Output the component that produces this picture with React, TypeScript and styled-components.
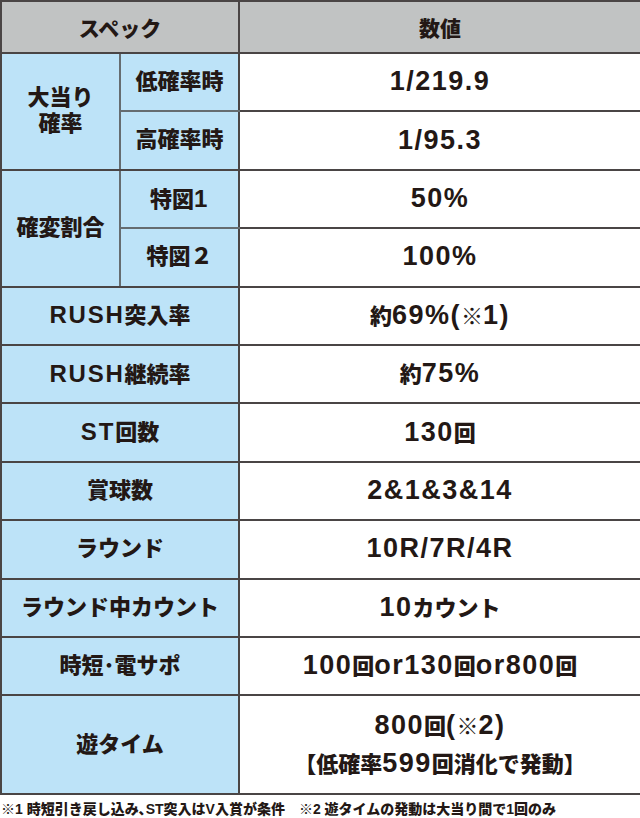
import React from "react";
import styled, { createGlobalStyle } from "styled-components";

const GlobalStyle = createGlobalStyle`
  html, body {
    margin: 0;
    padding: 0;
    background: #ffffff;
  }
  body {
    font-family: "Liberation Sans", "Noto Sans CJK JP", sans-serif;
    color: #231815;
  }
`;

const Sheet = styled.div`
  width: 640px;
`;

const Table = styled.table`
  width: 640px;
  border-collapse: collapse;
  table-layout: fixed;
`;

const Row = styled.tr<{ $h: number }>`
  height: ${(p) => p.$h}px;
`;

const HeadCell = styled.th`
  background: #c1c3c3;
  border: 2px solid #4a4545;
  padding: 0;
  font-size: 21px;
  font-weight: 900;
  text-align: center;
`;

const LabelCell = styled.td<{ $inner?: "left" | "right" }>`
  background: #bde3f8;
  border: 2px solid #4a4545;
  ${(p) => (p.$inner === "left" ? "border-left-color: #656c70;" : "")}
  ${(p) => (p.$inner === "right" ? "border-right-color: #656c70;" : "")}
  padding: 0;
  font-size: 22px;
  font-weight: 900;
  line-height: 1.2;
  text-align: center;
`;

const SubTopLine = styled.tr<{ $h: number }>`
  height: ${(p) => p.$h}px;
  & > td.sub {
    border-bottom-color: #656c70;
  }
`;

const ValueCell = styled.td`
  background: #ffffff;
  border: 2px solid #4a4545;
  padding: 0;
  font-size: 22px;
  font-weight: 900;
  line-height: 36px;
  text-align: center;
`;

// latin runs are set larger and looser than the kana/kanji around them
const Latin = styled.span<{ $size: number; $track: number }>`
  font-size: ${(p) => p.$size}px;
  font-weight: 700;
  letter-spacing: ${(p) => p.$track}px;
`;

const Note = styled.div`
  margin-top: 3px;
  padding-left: 1px;
  font-size: 14px;
  font-weight: 900;
  white-space: nowrap;
`;

function Mixed({ text, size, track }: { text: string; size: number; track: number }) {
  const parts = text.split(/([\x21-\x7e]+)/).filter(Boolean);
  return (
    <>
      {parts.map((p, i) =>
        /^[\x21-\x7e]+$/.test(p) ? (
          <Latin key={i} $size={size} $track={track}>
            {p}
          </Latin>
        ) : (
          <React.Fragment key={i}>{p}</React.Fragment>
        )
      )}
    </>
  );
}

const Label = ({ text }: { text: string }) => <Mixed text={text} size={24} track={1.8} />;
const Value = ({ text }: { text: string }) => <Mixed text={text} size={27} track={1.5} />;

const groups = [
  {
    label: ["大当り", "確率"],
    subs: [
      ["低確率時", "1/219.9"],
      ["高確率時", "1/95.3"],
    ],
  },
  {
    label: ["確変割合"],
    subs: [
      ["特図1", "50%"],
      ["特図２", "100%"],
    ],
  },
];

const singles: [string, string][] = [
  ["RUSH突入率", "約69%(※1)"],
  ["RUSH継続率", "約75%"],
  ["ST回数", "130回"],
  ["賞球数", "2&1&3&14"],
  ["ラウンド", "10R/7R/4R"],
  ["ラウンド中カウント", "10カウント"],
  ["時短･電サポ", "100回or130回or800回"],
];

const ROW = 58.4;

export default function App() {
  return (
    <Sheet>
      <GlobalStyle />
      <Table>
        <colgroup>
          <col style={{ width: 119 }} />
          <col style={{ width: 119 }} />
          <col style={{ width: 402 }} />
        </colgroup>
        <tbody>
          <Row $h={52}>
            <HeadCell colSpan={2}>スペック</HeadCell>
            <HeadCell>数値</HeadCell>
          </Row>
          {groups.map((g) => (
            <React.Fragment key={g.label.join("")}>
              <SubTopLine $h={ROW}>
                <LabelCell rowSpan={2} $inner="right">
                  {g.label.map((l) => (
                    <div key={l}>{l}</div>
                  ))}
                </LabelCell>
                <LabelCell className="sub" $inner="left">
                  <Label text={g.subs[0][0]} />
                </LabelCell>
                <ValueCell>
                  <Value text={g.subs[0][1]} />
                </ValueCell>
              </SubTopLine>
              <Row $h={ROW}>
                <LabelCell $inner="left">
                  <Label text={g.subs[1][0]} />
                </LabelCell>
                <ValueCell>
                  <Value text={g.subs[1][1]} />
                </ValueCell>
              </Row>
            </React.Fragment>
          ))}
          {singles.map(([k, v]) => (
            <Row $h={ROW} key={k}>
              <LabelCell colSpan={2}>
                <Label text={k} />
              </LabelCell>
              <ValueCell>
                <Value text={v} />
              </ValueCell>
            </Row>
          ))}
          <Row $h={99}>
            <LabelCell colSpan={2}>遊タイム</LabelCell>
            <ValueCell>
              <div>
                <Value text="800回(※2)" />
              </div>
              <div>
                <Value text="【低確率599回消化で発動】" />
              </div>
            </ValueCell>
          </Row>
        </tbody>
      </Table>
      <Note>※1 時短引き戻し込み､ST突入はV入賞が条件　※2 遊タイムの発動は大当り間で1回のみ</Note>
    </Sheet>
  );
}
